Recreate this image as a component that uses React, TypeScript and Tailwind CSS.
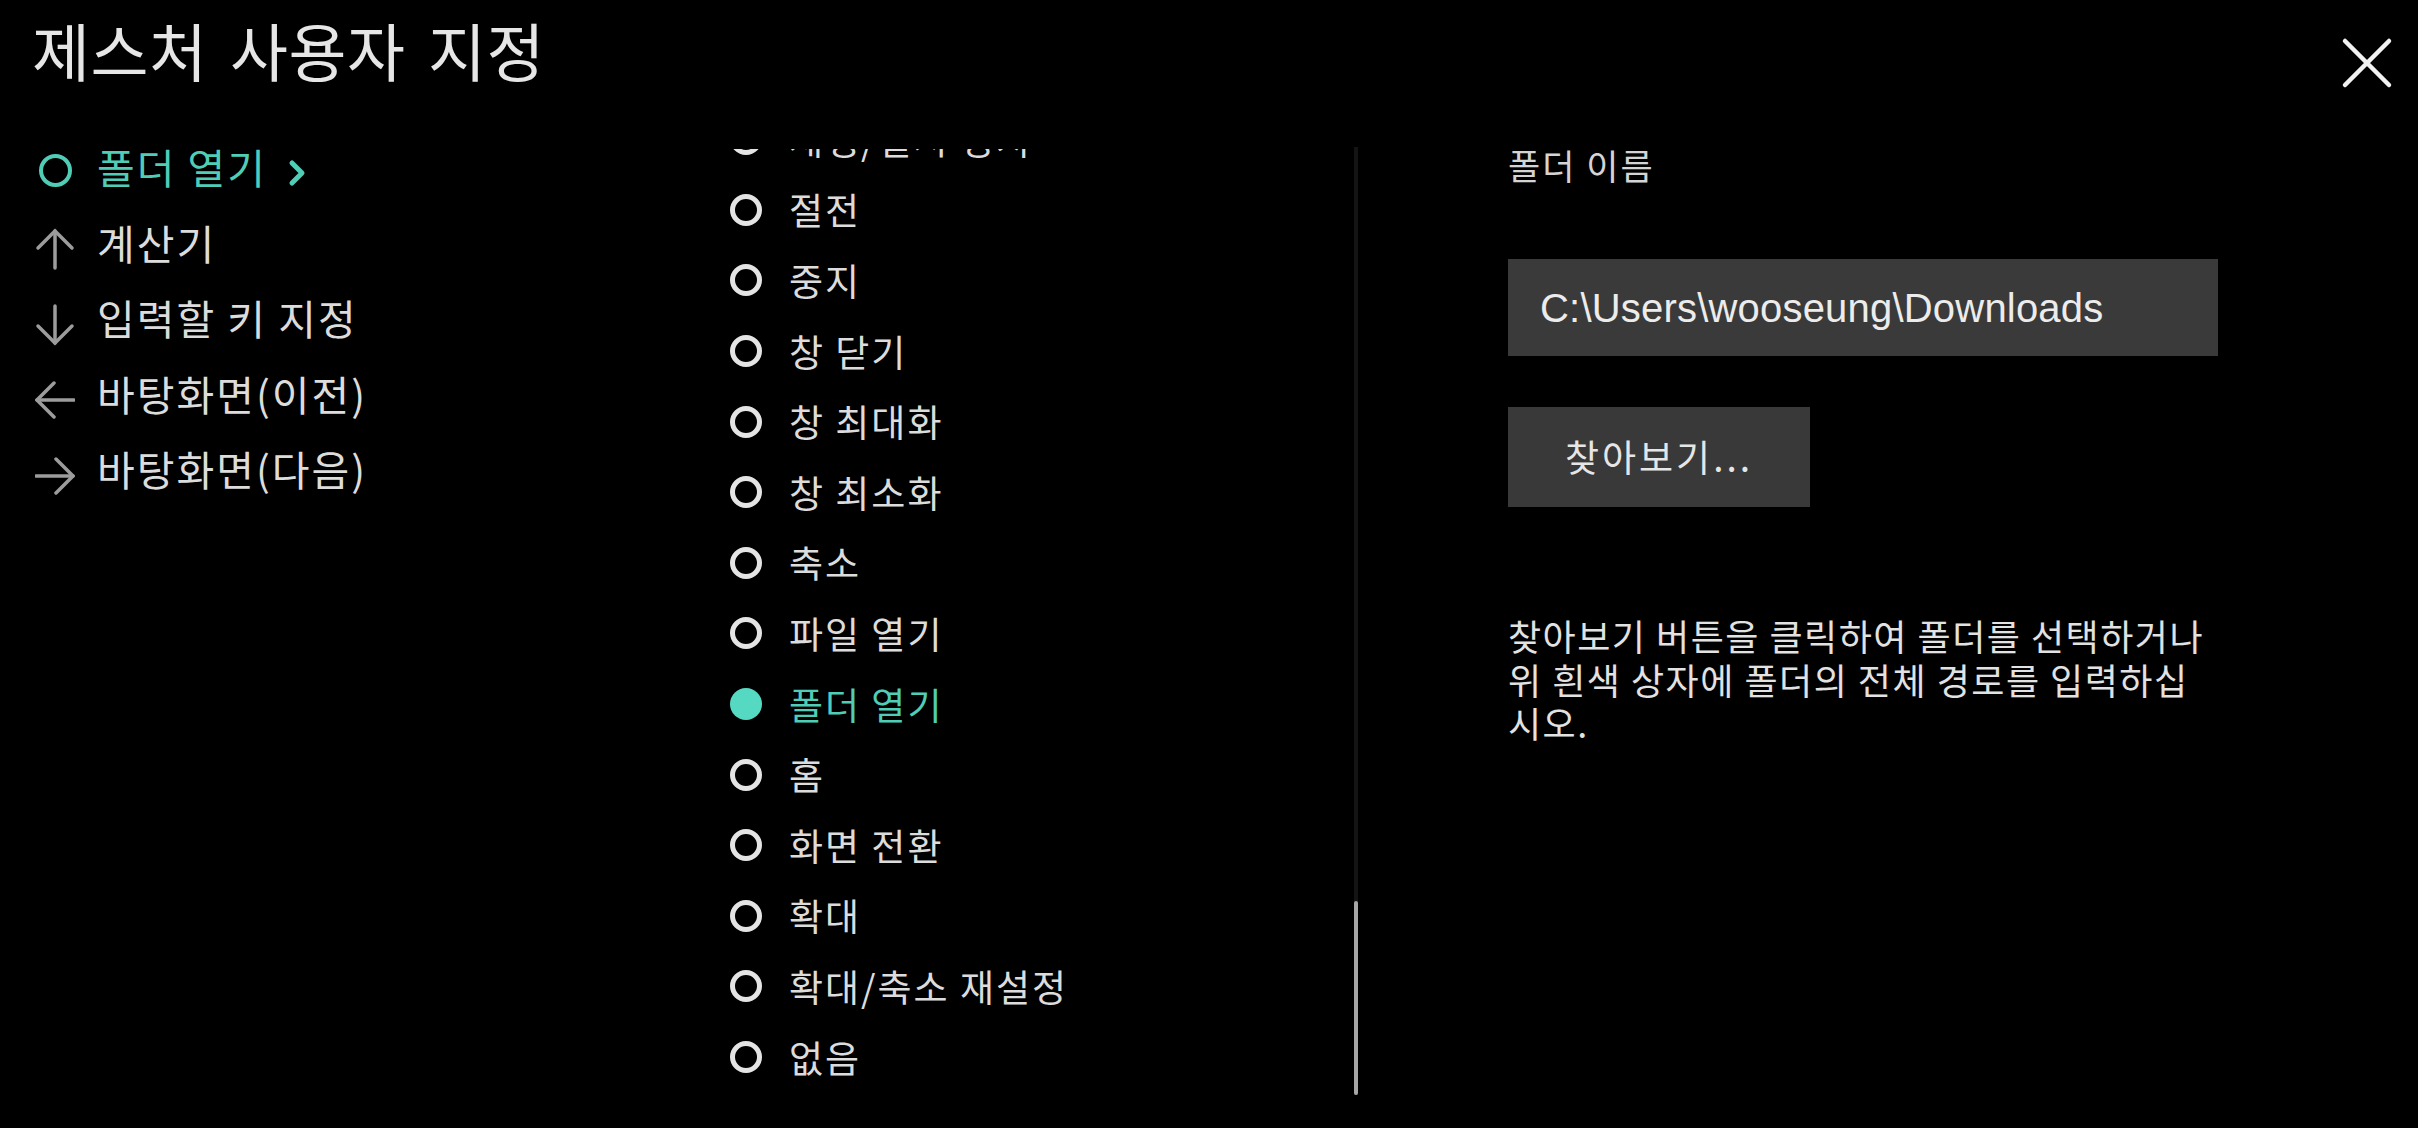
import React from 'react';

const kr = "font-['Noto_Sans_CJK_KR','Noto_Sans',sans-serif]";

type Dir = 'up' | 'down' | 'left' | 'right';

const ArrowIcon = ({ dir }: { dir: Dir }) => {
  const rot = { up: 0, right: 90, down: 180, left: 270 }[dir];
  return (
    <svg width="40" height="42" viewBox="0 0 40 42" className="mt-[14px]">
      <g transform={`rotate(${rot} 20 21)`} stroke="#9c9c9c" strokeWidth="3.5" strokeLinecap="round" fill="none">
        <path d="M20 3 L20 40" />
        <path d="M3 20 L20 3 L37 20" />
      </g>
    </svg>
  );
};

const shortcuts: { label: string; icon: Dir | 'ring' }[] = [
  { label: '폴더 열기', icon: 'ring' },
  { label: '계산기', icon: 'up' },
  { label: '입력할 키 지정', icon: 'down' },
  { label: '바탕화면(이전)', icon: 'left' },
  { label: '바탕화면(다음)', icon: 'right' },
];

const actions = [
  '재생/일시 정지',
  '절전',
  '중지',
  '창 닫기',
  '창 최대화',
  '창 최소화',
  '축소',
  '파일 열기',
  '폴더 열기',
  '홈',
  '화면 전환',
  '확대',
  '확대/축소 재설정',
  '없음',
];

const selected = '폴더 열기';

export default function App() {
  return (
    <div className={`w-full h-[1128px] bg-black text-[#e2e2e2] overflow-hidden ${kr}`}>
      {/* header */}
      <div className="flex items-start justify-between h-[130px]">
        <h1 className="pl-[32px] pt-[11px] text-[63px] leading-[76px] font-normal text-[#e6e6e6] tracking-[0.5px] [word-spacing:8px]">
          제스처 사용자 지정
        </h1>
        <button className="mr-[25px] mt-[37px]">
          <svg width="52" height="52" viewBox="0 0 52 52">
            <path d="M4 4 L48 48 M48 4 L4 48" stroke="#f2f2f2" strokeWidth="4.5" strokeLinecap="round" />
          </svg>
        </button>
      </div>

      <div className="flex items-start">
        {/* gesture directions */}
        <div className="w-[730px] pl-[35px] -mt-[1px] shrink-0">
          {shortcuts.map((s, i) => (
            <div key={i} className="h-[75.5px] flex items-center gap-[22px]">
              <div className="w-[40px] flex justify-center">
                {s.icon === 'ring' ? (
                  <div className="w-[33px] h-[33px] rounded-full border-[4px] border-[#4fcdb6] mt-[8px]" />
                ) : (
                  <ArrowIcon dir={s.icon} />
                )}
              </div>
              <span
                className={`text-[41px] leading-none tracking-[2px] ${i === 0 ? 'text-[#4fcdb6]' : 'text-[#dcdcdc]'}`}
              >
                {s.label}
              </span>
              {i === 0 && (
                <svg width="20" height="28" viewBox="0 0 20 28" className="-ml-[2px] mt-[12px]">
                  <path d="M5 4 L15 14 L5 24" stroke="#4fcdb6" strokeWidth="5" strokeLinecap="round" strokeLinejoin="round" fill="none" />
                </svg>
              )}
            </div>
          ))}
        </div>

        {/* action list */}
        <div className="w-[624px] mt-[19px] h-[945px] overflow-hidden shrink-0">
          <div className="-mt-[45px]">
            {actions.map((a) => {
              const on = a === selected;
              return (
                <div key={a} className="h-[70.6px] flex items-center gap-[27px]">
                  <div
                    className={`w-[32px] h-[32px] rounded-full ${
                      on ? 'bg-[#56d9c3]' : 'border-[5px] border-[#e4e4e4]'
                    }`}
                  />
                  <span className={`text-[37px] leading-none tracking-[2px] ${on ? 'text-[#4fcdb6]' : 'text-[#dcdcdc]'}`}>
                    {a}
                  </span>
                </div>
              );
            })}
          </div>
        </div>

        {/* scrollbar */}
        <div className="w-[4px] mt-[17px] h-[948px] bg-[#141414] flex flex-col justify-end shrink-0">
          <div className="h-[194px] bg-[#a6a6a6] rounded-full" />
        </div>

        {/* folder settings */}
        <div className="pl-[150px]">
          <div className="mt-[10px] text-[35px] leading-[50px] tracking-[2px] text-[#d4d4d4]">폴더 이름</div>
          <div className="mt-[69px] w-[710px] h-[97px] bg-[#3a3a3a] flex items-center pl-[32px]">
            <span className="font-['Liberation_Sans',Arial,sans-serif] text-[40px] text-[#ececec] tracking-[0.2px]">
              C:\Users\wooseung\Downloads
            </span>
          </div>
          <button className="mt-[51px] w-[302px] h-[100px] bg-[#393939] flex items-center justify-center text-[37px] tracking-[3px] text-[#e6e6e6]">
            찾아보기...
          </button>
          <p className="mt-[107px] text-[36px] leading-[43.5px] tracking-[1.5px] text-[#e2e2e2] whitespace-nowrap">
            찾아보기 버튼을 클릭하여 폴더를 선택하거나
            <br />
            위 흰색 상자에 폴더의 전체 경로를 입력하십
            <br />
            시오.
          </p>
        </div>
      </div>
    </div>
  );
}
